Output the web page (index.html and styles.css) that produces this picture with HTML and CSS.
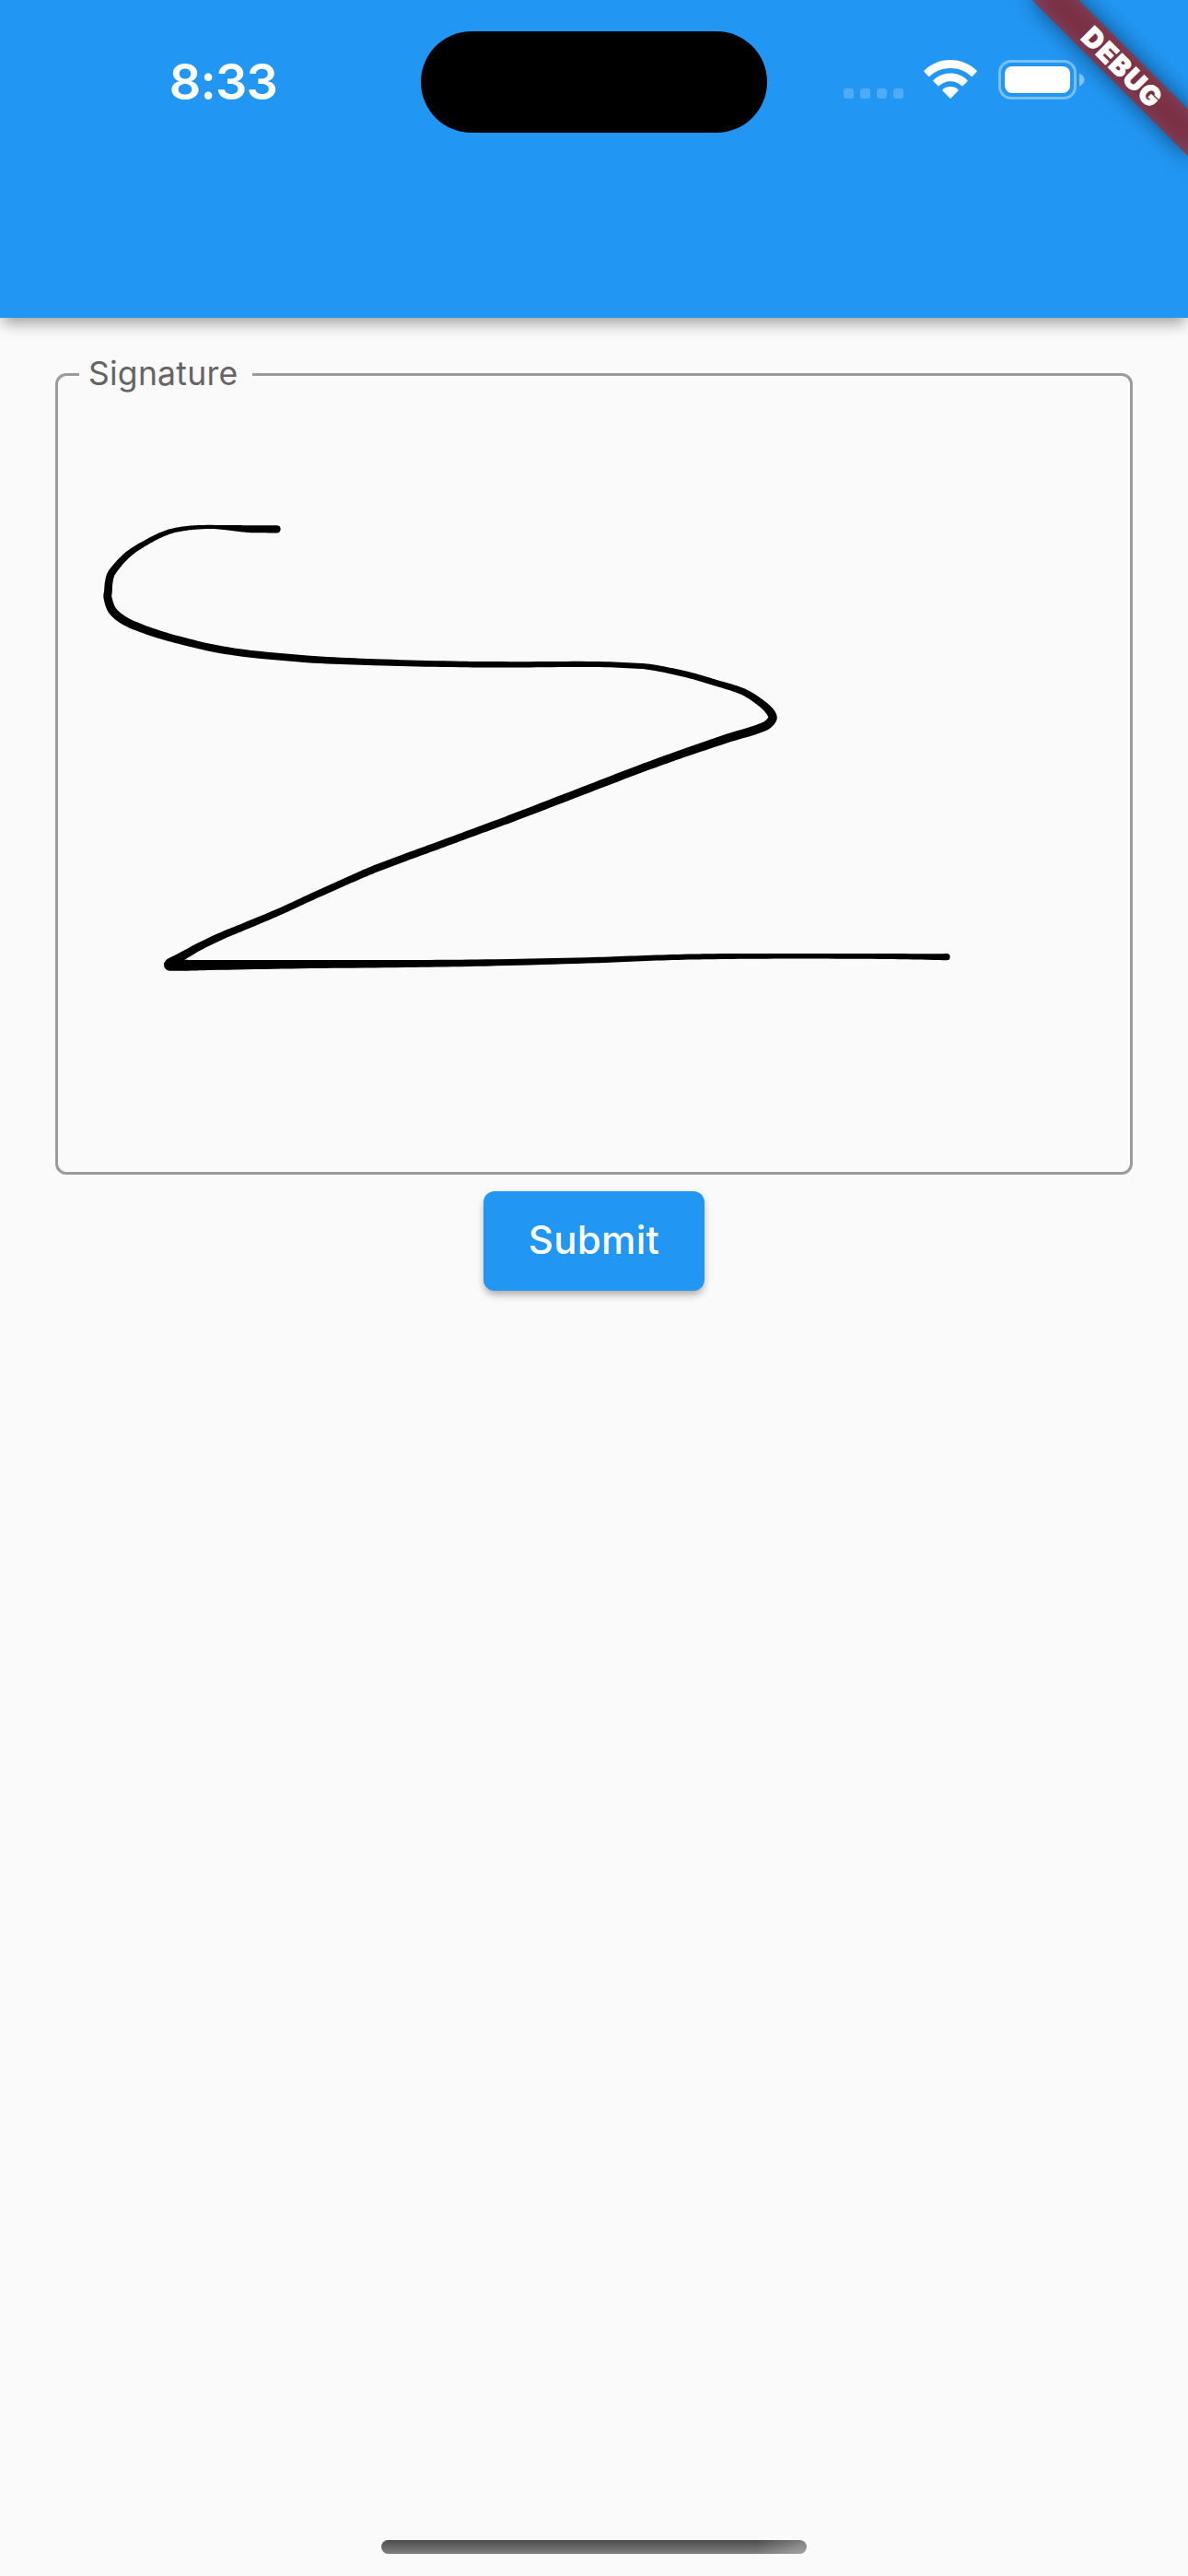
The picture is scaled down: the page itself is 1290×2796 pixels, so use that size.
FILE: index.html
```html
<!DOCTYPE html>
<html lang="en">
<head>
<meta charset="utf-8">
<title>Signature</title>
<link rel="stylesheet" href="styles.css">
</head>
<body>
<div class="screen">
  <header class="app-bar">
    <div class="status-bar">
      <span class="clock">8:33</span>
      <span class="island"></span>
      <span class="indicators">
        <svg class="cellular" viewBox="0 0 65 11" width="65" height="11">
          <rect x="0" width="11" height="11" rx="3"/><rect x="18" width="11" height="11" rx="3"/><rect x="36" width="11" height="11" rx="3"/><rect x="54" width="11" height="11" rx="3"/>
        </svg>
        <svg class="wifi" viewBox="0 0 58 43" width="58" height="43">
          <path d="M29 0C40 0 50.500 4.500 57.500 11.600Q58 12.300 57.500 13L52.700 17.900Q52 18.300 51.400 17.800C45.500 12 37.500 8.900 29 8.900S12.500 12 6.600 17.800Q6 18.300 5.300 17.900L.5 13Q0 12.300.5 11.600C7.500 4.500 18 0 29 0Z"/>
          <path d="M29 14.600C36 14.600 42.500 17.300 47.400 21.900Q48 22.600 47.500 23.200L42.500 28.200Q41.800 28.700 41.100 28.100C37.800 25 33.500 23.300 29 23.300S20.200 25 16.900 28.100Q16.200 28.700 15.500 28.200L10.500 23.200Q10 22.600 10.600 21.900C15.500 17.300 22 14.600 29 14.600Z"/>
          <path d="M29 29C32.300 29 35.300 30.200 37.400 32.200Q38 32.800 37.400 33.500L29.700 41.600Q29 42.300 28.300 41.600L20.600 33.500Q20 32.800 20.600 32.200C22.700 30.200 25.700 29 29 29Z"/>
        </svg>
        <svg class="battery" viewBox="0 0 94 43" width="94" height="43">
          <rect class="battery-shell" x="1.500" y="1.500" width="82" height="40" rx="12.500"/>
          <rect x="7" y="7" width="71" height="29" rx="8"/>
          <path class="battery-tip" d="M88 14.500Q93.500 17 93.500 21.500T88 28.500Z"/>
        </svg>
      </span>
    </div>
  </header>
  <main class="form">
    <fieldset class="signature-field">
      <legend>Signature</legend>
      <svg class="pad" viewBox="63 427 1164 845"><path id="ink"/></svg>
    </fieldset>
    <button class="submit" type="button">Submit</button>
  </main>
  <footer class="home-area"><span class="home-indicator"></span></footer>
  <div class="debug-banner"><span class="debug-strip">DEBUG</span></div>
</div>
<script src="ink.js"></script>
</body>
</html>
```
FILE: styles.css
```css
* { box-sizing: border-box; }

body {
  margin: 0;
  background: #fafafa;
  font-family: Inter, "Liberation Sans", sans-serif;
}

.screen {
  position: relative;
  display: flex;
  flex-direction: column;
  width: 1290px;
  height: 2796px;
  overflow: hidden;
}

.app-bar {
  height: 345px;
  flex: none;
  background: #2196f3;
  box-shadow: 0 9px 15px -3px rgba(0, 0, 0, .36);
}

.status-bar {
  display: grid;
  grid-template-columns: 457px 376px 457px;
  height: 177px;
  color: #fff;
}

.clock {
  padding: 55px 0 0 28px;
  text-align: center;
  font-size: 54px;
  line-height: 67px;
  font-weight: 600;
  letter-spacing: -.8px;
}

.island {
  height: 110.500px;
  margin-top: 33.500px;
  border-radius: 56px;
  background: #000;
}

.indicators {
  display: flex;
  align-items: flex-end;
  height: 108px;
  padding-left: 83px;
  fill: #fff;
}

.cellular { margin: 0 22px 1px 0; opacity: .2; }
.wifi { margin-right: 23px; }
.battery-shell { fill: none; stroke: #fff; stroke-width: 3; opacity: .4; }
.battery-tip { opacity: .45; }

.form {
  display: flex;
  flex: 1;
  flex-direction: column;
  align-items: center;
  gap: 18px;
  padding: 41px 60px 0;
}

.signature-field {
  width: 1170px;
  height: 889px;
  margin: 0;
  padding: 0;
  border: 3px solid #9b9b9b;
  border-radius: 12px;
}

.signature-field legend {
  width: 188px;
  height: 41px;
  margin-left: 23px;
  padding: 0 0 0 10px;
  color: #646464;
  font-size: 35.500px;
  line-height: 39px;
  letter-spacing: .25px;
  white-space: nowrap;
}

.pad { display: block; width: 1164px; height: 845px; }

.submit {
  width: 240px;
  height: 108px;
  padding: 0 0 2px;
  border: 0;
  border-radius: 12px;
  background: #2196f3;
  color: #fff;
  font: 500 42px/106px Inter, "Liberation Sans", sans-serif;
  letter-spacing: .3px;
  box-shadow: 0 5px 8px -1px rgba(0, 0, 0, .33);
}

.home-area {
  display: flex;
  justify-content: center;
  height: 39px;
}

.home-indicator {
  width: 462px;
  height: 15px;
  border-radius: 8px;
  background:
    linear-gradient(100deg, transparent 88%, rgba(255, 255, 255, .3)),
    linear-gradient(#4c4c4c, #808080);
}

/* Corner ribbon, centred 102px from the top right corner */
.debug-banner {
  position: absolute;
  top: 54px;
  left: 1098px;
  width: 240px;
  height: 36px;
  transform: rotate(45deg);
}

.debug-banner::before {
  content: "";
  position: absolute;
  inset: 0;
  background: rgba(0, 0, 0, .5);
  filter: blur(12px);
}

.debug-strip {
  position: relative;
  display: block;
  background: rgba(183, 28, 28, .627);
  color: #fff;
  text-align: center;
  text-indent: 3px;
  font-size: 29.500px;
  line-height: 36px;
  font-weight: 900;
  letter-spacing: 1.400px;
  -webkit-text-stroke: .8px #fff;
}
```
FILE: ink.js
```js
// Pen strokes as [x, y, width] samples.
const strokes = [
  [
    [300.5,574.3,8.3],[273,574.2,8],[262,573.7,7.2],[253.3,573.1,6.2],
    [243,572.5,5],[233,572,4.2],[223,572,4.2],
    [203,573.3,4.7],[182,577.7,5.3],[156.7,590,6],[138,602.7,7],
    [121.3,621.7,8.2],[118.2,632,8.5],[117.4,642,8.7],[116.9,648.3,9],
    [121.3,661.5,9.3],[130,670.3,9.2],
    [146,679,8.9],[183.3,691.7,8.3],[246.7,706.3,8],[333.3,715.3,7.7],
    [406.7,718.7,7],[500,721,6.5],[566.7,721.3,6.3],[646.7,721,6],
    [696.7,723,6],[713.3,725.2,6.3],[746.7,732.3,6.7],[780,742,6.7],
    [806.7,750.7,7.3],[825,762,8],[836.2,772.5,9],[838.8,780,9.6],
    [830,788.5,9.7],[790,801.3,9.5],[746.7,816,9],[700,832.7,8.7],
    [640,855.7,8.5],[553.3,889,8.3],[520,901.3,8],[476.7,917.3,8],
    [440,930.7,8],[413.3,940.7,8],[393.3,948.9,8],[343.3,971.2,7.5],
    [303.3,989.6,7.5],[260,1007.8,7.8],[243.3,1014.6,8],
    [216.7,1027.3,8.3],[193.3,1040.5,9.5],[184.5,1045.5,11]
  ],
  [
    [184.5,1047.3,13],[205,1047.8,11.7],[226.7,1047.5,11],[326.7,1046.6,9.3],
    [440,1046,8],[526.7,1045,7.3],[650,1042,6.3],[707.4,1039.8,6],
    [764.8,1038.3,6],[860.5,1037.7,5.6],[956,1038,5.8],[994.4,1038.3,6.3],
    [1028,1038.7,7.2]
  ]
];

function sample(points) {
  const out = [];
  for (let i = 0; i < points.length - 1; i++) {
    const b = points[i], c = points[i + 1];
    const a = points[i - 1] || b, d = points[i + 2] || c;
    const len = Math.hypot(c[0] - b[0], c[1] - b[1]);
    const la = Math.hypot(b[0] - a[0], b[1] - a[1]) || len;
    const ld = Math.hypot(d[0] - c[0], d[1] - c[1]) || len;
    const steps = 10;
    for (let s = 0; s < steps; s++) {
      const t = s / steps, t2 = t * t, t3 = t2 * t;
      const p = [0, 1].map(k => {
        const m1 = (c[k] - a[k]) / (len + la) * len;
        const m2 = (d[k] - b[k]) / (len + ld) * len;
        return (2*t3 - 3*t2 + 1) * b[k] + (t3 - 2*t2 + t) * m1
          + (3*t2 - 2*t3) * c[k] + (t3 - t2) * m2;
      });
      out.push([p[0], p[1], b[2] + (c[2] - b[2]) * t]);
    }
  }
  out.push(points[points.length - 1]);
  return out;
}

function outline(points) {
  const pts = sample(points), left = [], right = [];
  pts.forEach((p, i) => {
    const a = pts[Math.max(0, i - 1)], b = pts[Math.min(pts.length - 1, i + 1)];
    const len = Math.hypot(b[0] - a[0], b[1] - a[1]);
    const nx = -(b[1] - a[1]) / len * p[2] / 2;
    const ny = (b[0] - a[0]) / len * p[2] / 2;
    left.push((p[0] + nx).toFixed(2) + " " + (p[1] + ny).toFixed(2));
    right.unshift((p[0] - nx).toFixed(2) + " " + (p[1] - ny).toFixed(2));
  });
  const r0 = pts[0][2] / 2, r1 = pts[pts.length - 1][2] / 2;
  return `M${left.join("L")}A${r1} ${r1} 0 0 0 ${right[0]}L${right.slice(1).join("L")}A${r0} ${r0} 0 0 0 ${left[0]}Z`;
}

document.getElementById("ink").setAttribute("d", strokes.map(outline).join(""));
```
